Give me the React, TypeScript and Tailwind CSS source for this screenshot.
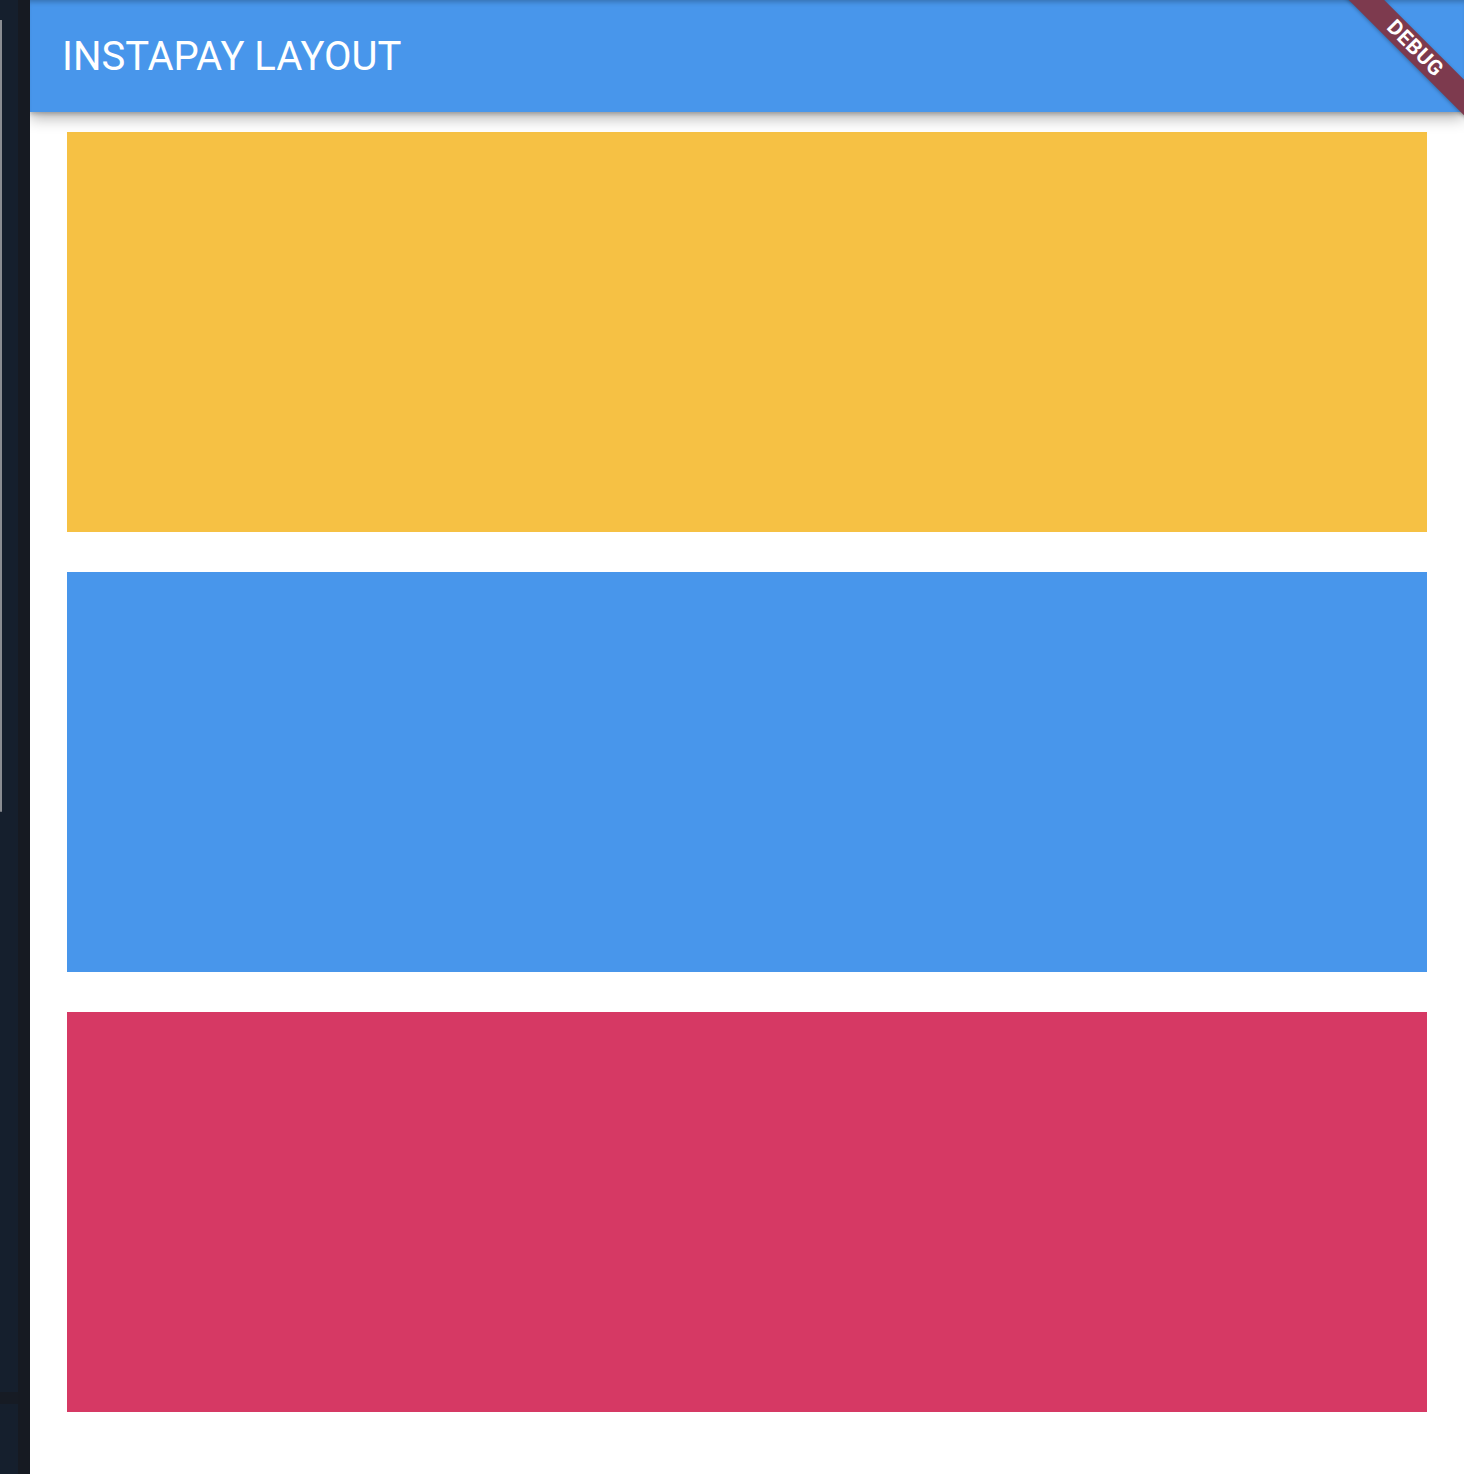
import React from 'react'

const boxes = ['bg-[#F6C144]', 'bg-[#4896EB]', 'bg-[#D63964]']

const App = () => {
  return (
    <div className="flex h-[1474px] w-[1464px] overflow-hidden font-['Roboto',sans-serif]">
      {/* left edge of the host window */}
      <div className="flex w-[30px] shrink-0">
        <div className="flex w-[18px] flex-col bg-[#151F2D]">
          <div className="mt-[20px] h-[792px] w-[2px] rounded-b-sm bg-[#8A8D92]" />
          <div className="mt-[580px] h-[12px] w-full bg-[#161B24]" />
        </div>
        <div className="w-[12px] bg-[#161A22]" />
      </div>

      <div className="relative flex flex-1 flex-col overflow-hidden bg-white">
        <header className="relative z-10 flex h-[112px] shrink-0 items-center bg-[#4896EB] pl-[32px] pt-[2px] shadow-[0_6px_14px_rgba(0,0,0,0.3),0_2px_4px_rgba(0,0,0,0.2),inset_0_5px_5px_-3px_rgba(0,0,0,0.25)]">
          <h1 className="text-[40px] font-normal text-white">INSTAPAY LAYOUT</h1>
        </header>

        <section className="flex flex-col gap-[40px] px-[37px] pt-[20px]">
          {boxes.map((c) => (
            <div key={c} className={`h-[400px] w-full ${c}`} />
          ))}
        </section>

        {/* debug banner */}
        <div className="absolute left-[1265px] top-[36px] z-20 flex h-[25px] w-[240px] rotate-45 items-center justify-center bg-[#7D3A4E] shadow-[0_1px_4px_rgba(0,0,0,0.3)]">
          <span className="text-[21px] font-bold leading-none tracking-[0.6px] text-white">DEBUG</span>
        </div>
      </div>
    </div>
  )
}

export default App
